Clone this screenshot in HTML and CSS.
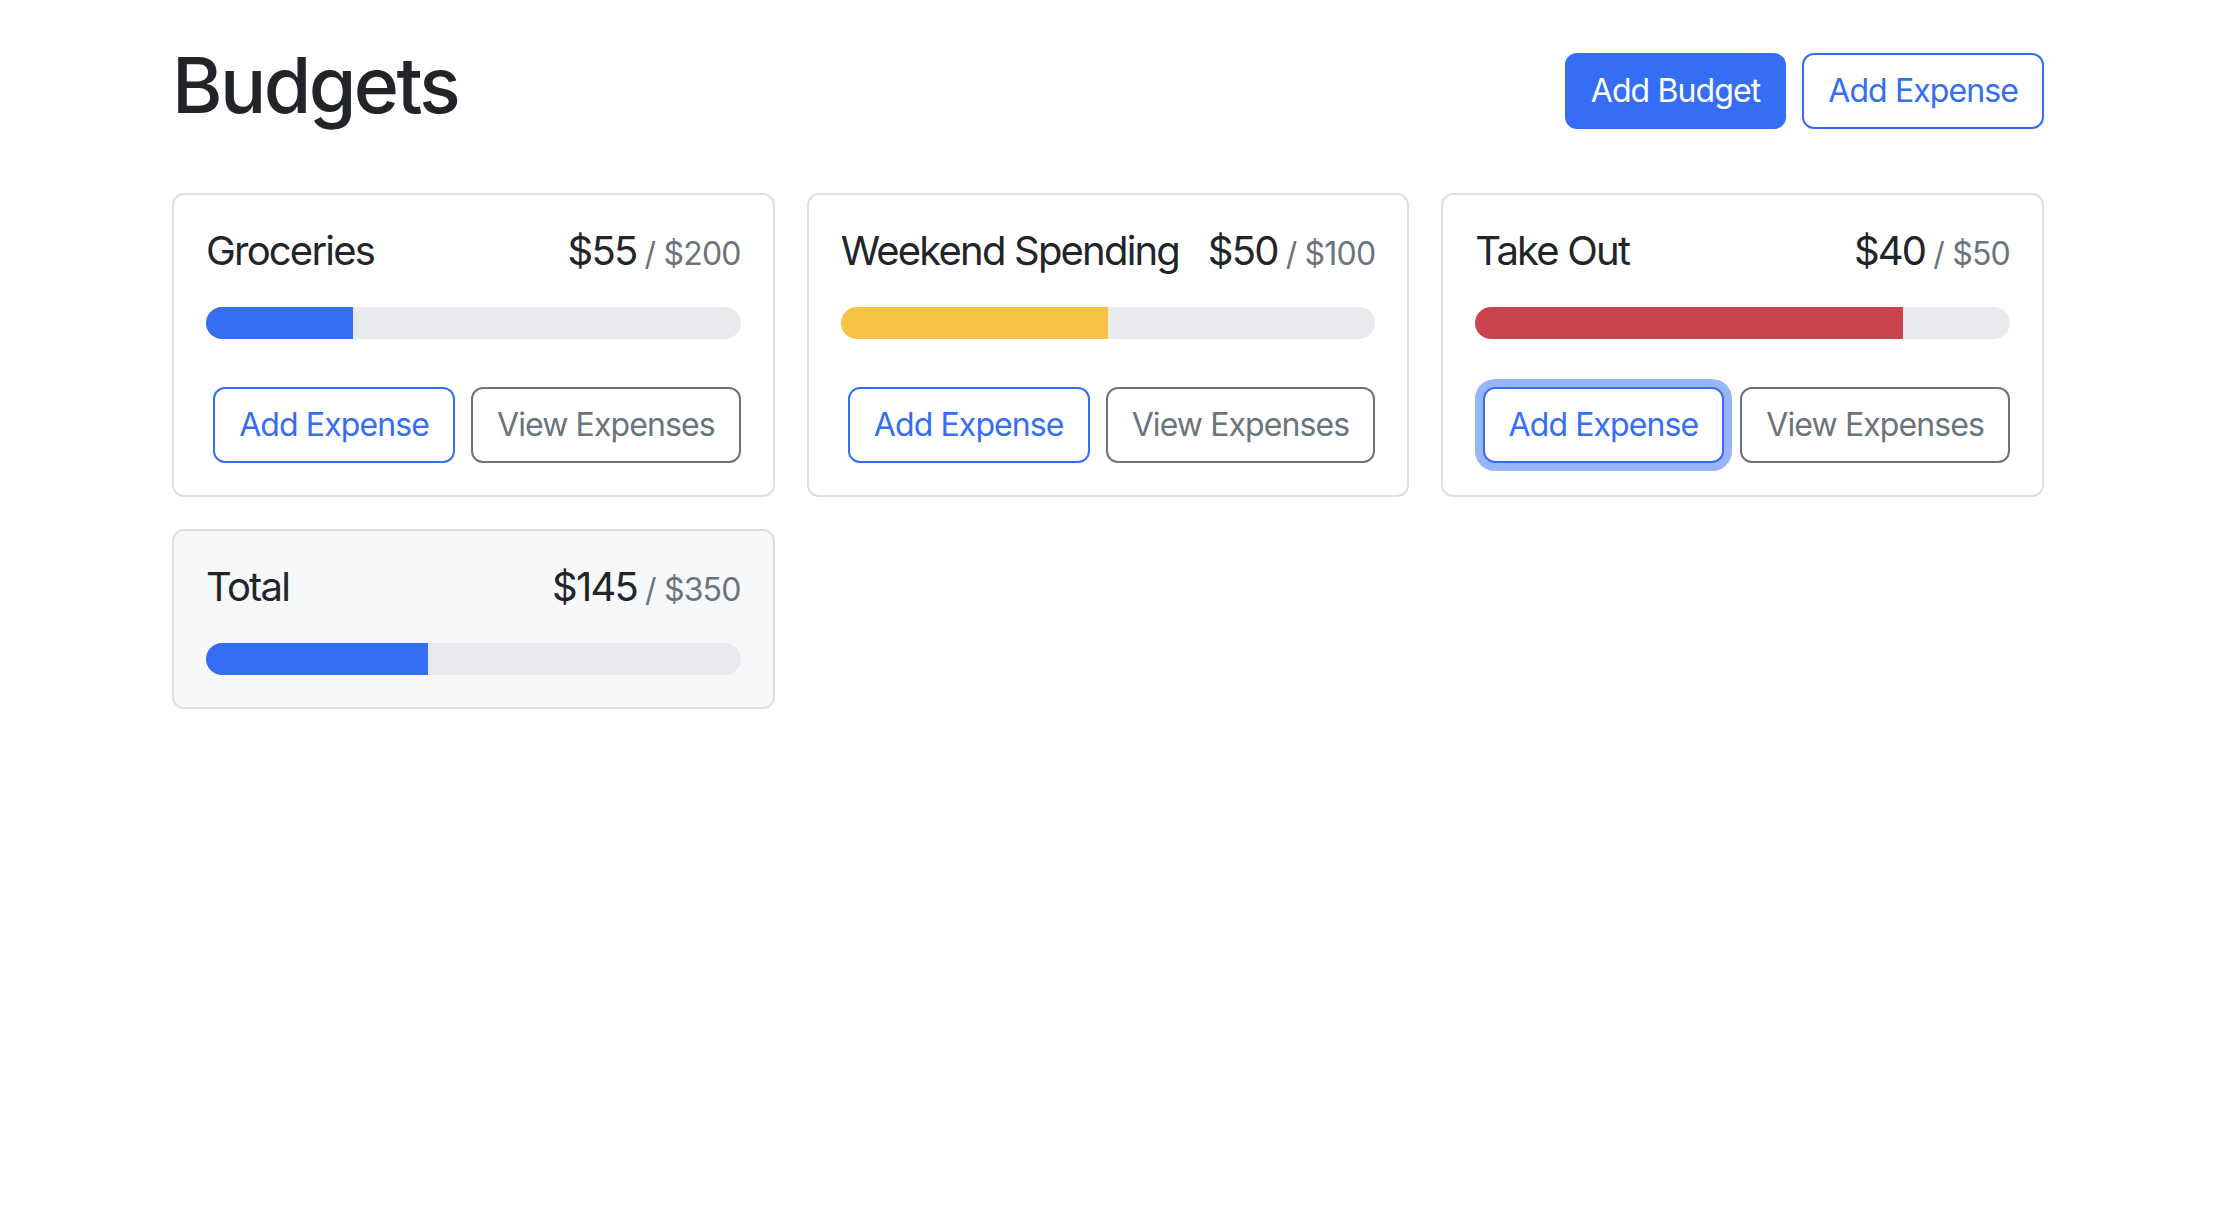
FILE: index.html
```html
<!DOCTYPE html>
<html lang="en">
<head>
<meta charset="utf-8">
<title>Budgets</title>
<link rel="stylesheet" href="styles.css">
</head>
<body>
<div class="container">
  <header class="header">
    <h1 class="page-title">Budgets</h1>
    <div class="header-actions">
      <button class="btn btn-primary">Add Budget</button>
      <button class="btn btn-outline-primary">Add Expense</button>
    </div>
  </header>

  <main class="grid">
    <section class="card">
      <div class="card-title">
        <div class="name">Groceries</div>
        <div class="amount">$55<span class="max">/ $200</span></div>
      </div>
      <div class="progress"><div class="bar bar-blue" style="width: 27.5%"></div></div>
      <div class="actions">
        <button class="btn btn-outline-primary">Add Expense</button>
        <button class="btn btn-outline-secondary">View Expenses</button>
      </div>
    </section>

    <section class="card">
      <div class="card-title">
        <div class="name">Weekend Spending</div>
        <div class="amount">$50<span class="max">/ $100</span></div>
      </div>
      <div class="progress"><div class="bar bar-yellow" style="width: 50%"></div></div>
      <div class="actions">
        <button class="btn btn-outline-primary">Add Expense</button>
        <button class="btn btn-outline-secondary">View Expenses</button>
      </div>
    </section>

    <section class="card">
      <div class="card-title">
        <div class="name">Take Out</div>
        <div class="amount">$40<span class="max">/ $50</span></div>
      </div>
      <div class="progress"><div class="bar bar-red" style="width: 80%"></div></div>
      <div class="actions">
        <button class="btn btn-outline-primary is-focused">Add Expense</button>
        <button class="btn btn-outline-secondary">View Expenses</button>
      </div>
    </section>

    <section class="card card-light">
      <div class="card-title">
        <div class="name">Total</div>
        <div class="amount">$145<span class="max">/ $350</span></div>
      </div>
      <div class="progress"><div class="bar bar-blue" style="width: 41.43%"></div></div>
    </section>
  </main>
</div>
</body>
</html>
```

FILE: styles.css
```css
* {
  box-sizing: border-box;
}

html, body {
  margin: 0;
  padding: 0;
  background: #ffffff;
}

body {
  font-family: Inter, "Liberation Sans", sans-serif;
  color: #212428;
}

.container {
  width: 1872px;
  margin: 0 auto;
  padding-top: 37px;
}

.header {
  display: flex;
  align-items: flex-start;
  gap: 16px;
  margin-bottom: 60px;
}

.page-title {
  margin: 0 auto 0 0;
  font-size: 77px;
  line-height: 96px;
  font-weight: 500;
  letter-spacing: -2.6px;
  color: #212428;
  white-space: nowrap;
}

.header-actions {
  display: flex;
  gap: 16px;
  margin-top: 16px;
}

.btn {
  font-family: inherit;
  font-size: 32px;
  line-height: 48px;
  font-weight: 400;
  padding: 12px 24px;
  border: 2px solid transparent;
  border-radius: 12px;
  background: #ffffff;
  cursor: pointer;
  letter-spacing: -0.9px;
  white-space: nowrap;
}

.btn-primary {
  background: #356ef4;
  border-color: #356ef4;
  color: #ffffff;
}

.btn-outline-primary {
  color: #356ef4;
  border-color: #356ef4;
}

.btn-outline-secondary {
  color: #6b737b;
  border-color: #6b737b;
}

.is-focused {
  box-shadow: 0 0 0 8px #98b5f7;
}

.grid {
  display: grid;
  grid-template-columns: repeat(3, 1fr);
  gap: 32px;
  align-items: start;
}

.card {
  border: 2px solid #dedfe0;
  border-radius: 12px;
  padding: 32px;
  background: #ffffff;
}

.card-light {
  background: #f7f8fa;
}

.card-title {
  display: flex;
  justify-content: space-between;
  align-items: baseline;
  font-size: 40px;
  line-height: 48px;
  height: 48px;
  margin-bottom: 32px;
  letter-spacing: -1.8px;
  white-space: nowrap;
}

.name {
  margin-right: 16px;
  flex-shrink: 0;
}

.amount {
  display: flex;
  align-items: baseline;
  flex-shrink: 0;
}

.max {
  font-size: 32px;
  line-height: 40px;
  color: #6b737b;
  margin-left: 8px;
  letter-spacing: -0.8px;
}

.progress {
  height: 32px;
  border-radius: 16px;
  background: #e9eaed;
  overflow: hidden;
  display: flex;
}

.bar {
  height: 100%;
}

.bar-blue {
  background: #346ef4;
}

.bar-yellow {
  background: #f5c244;
}

.bar-red {
  background: #c9444c;
}

.actions {
  display: flex;
  justify-content: flex-end;
  gap: 16px;
  margin-top: 48px;
}
```
